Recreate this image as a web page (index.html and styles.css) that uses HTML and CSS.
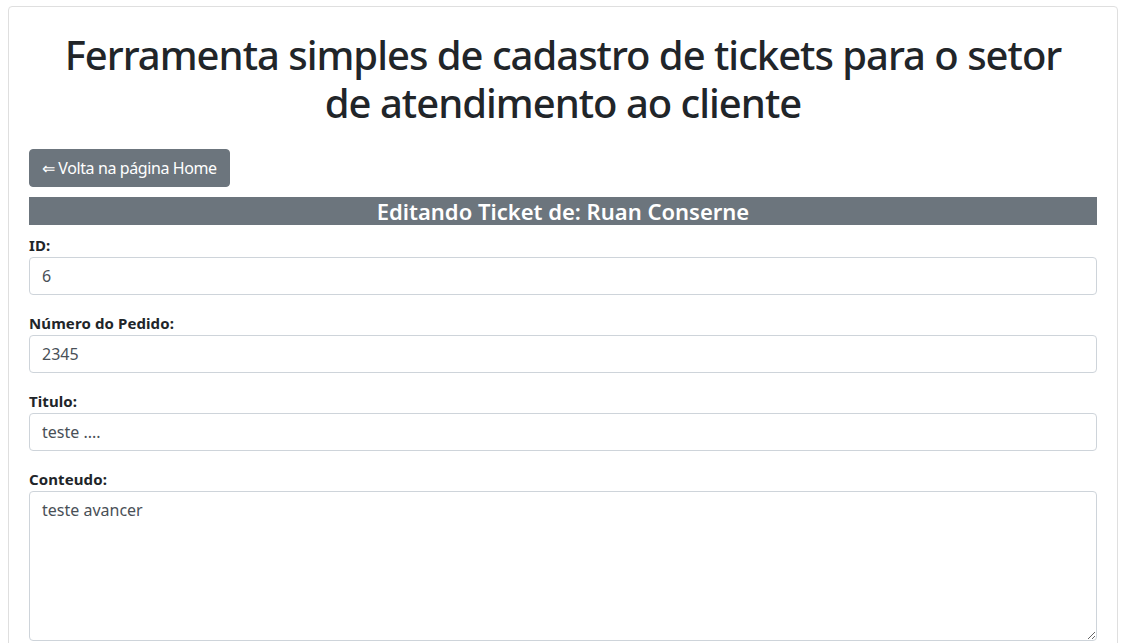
FILE: index.html
```html
<!DOCTYPE html>
<html lang="pt-BR">
<head>
<meta charset="utf-8">
<title>Editar Ticket</title>
<link rel="stylesheet" href="styles.css">
</head>
<body>
<div class="card">
  <div class="card-body">
    <h1 class="title">Ferramenta simples de cadastro de tickets para o setor de atendimento ao cliente</h1>
    <a class="btn" href="#">&lArr; Volta na página Home</a>
    <h4 class="bar">Editando Ticket de: Ruan Conserne</h4>
    <form class="form">
      <div class="group">
        <label class="label">ID:</label>
        <input class="control" type="text" value="6">
      </div>
      <div class="group">
        <label class="label">Número do Pedido:</label>
        <input class="control" type="text" value="2345">
      </div>
      <div class="group">
        <label class="label">Titulo:</label>
        <input class="control" type="text" value="teste ....">
      </div>
      <div class="group">
        <label class="label">Conteudo:</label>
        <textarea class="control area">teste avancer</textarea>
      </div>
    </form>
  </div>
</div>
</body>
</html>
```
FILE: styles.css
```css
* { box-sizing: border-box; }
html, body { margin: 0; }
body {
  padding: 6px 8px 8px 8px;
  font-family: "Noto Sans", "Open Sans", sans-serif;
  font-size: 16px;
  line-height: 1.5;
  color: #212529;
  background: #fff;
}
.card {
  border: 1px solid #dfdfdf;
  border-radius: 4px;
  background: #fff;
}
.card-body {
  padding: 20px;
  display: flex;
  flex-direction: column;
  align-items: flex-start;
}
.title {
  align-self: stretch;
  margin: 4px 0 22px 0;
  padding: 0 24px;
  font-size: 40px;
  font-weight: 500;
  letter-spacing: -1px;
  line-height: 48px;
  text-align: center;
  color: #212529;
}
.btn {
  display: inline-block;
  padding: 6px 12px;
  border: 1px solid #6c757d;
  border-radius: 4px;
  background: #6c757d;
  color: #fff;
  text-decoration: none;
  font-size: 16px;
  letter-spacing: -0.4px;
  line-height: 24px;
}
.bar {
  align-self: stretch;
  margin: 10px 0 8px 0;
  background: #6c757d;
  color: #fff;
  text-align: center;
  font-size: 22px;
  font-weight: 600;
  line-height: 28px;
  height: 28px;
}
.form { align-self: stretch; }
.group { margin-bottom: 16px; }
.label {
  display: block;
  font-weight: 700;
  font-size: 15px;
  letter-spacing: 0.1px;
  line-height: 24px;
}
.control {
  display: block;
  width: 100%;
  height: 38px;
  padding: 6px 12px;
  font-family: inherit;
  font-size: 16px;
  line-height: 24px;
  color: #495057;
  background: #fff;
  border: 1px solid #ced4da;
  border-radius: 4px;
}
.area {
  height: 150px;
  resize: vertical;
}
```
